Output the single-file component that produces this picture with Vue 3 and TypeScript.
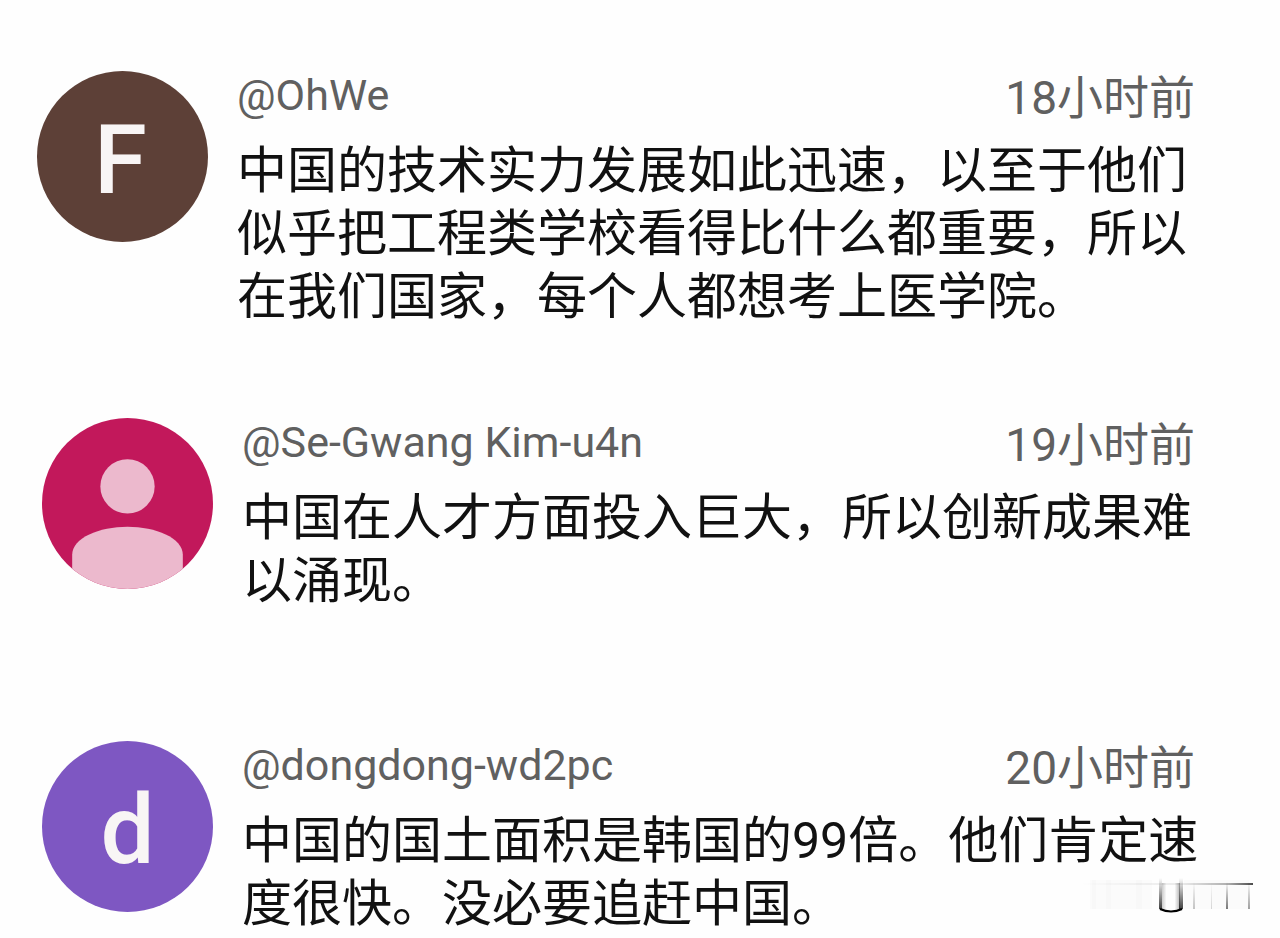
<script setup lang="ts">
interface Comment {
  id: string
  author: string
  time: string
  avatar: 'F' | 'd' | 'person'
  lines: string[]
}

const comments: Comment[] = [
  {
    id: 'first',
    author: '@OhWe',
    time: '18小时前',
    avatar: 'F',
    lines: [
      '中国的技术实力发展如此迅速，以至于他们',
      '似乎把工程类学校看得比什么都重要，所以',
      '在我们国家，每个人都想考上医学院。',
    ],
  },
  {
    id: 'second',
    author: '@Se-Gwang Kim-u4n',
    time: '19小时前',
    avatar: 'person',
    lines: ['中国在人才方面投入巨大，所以创新成果难', '以涌现。'],
  },
  {
    id: 'third',
    author: '@dongdong-wd2pc',
    time: '20小时前',
    avatar: 'd',
    lines: ['中国的国土面积是韩国的99倍。他们肯定速', '度很快。没必要追赶中国。'],
  },
]
</script>

<template>
  <main class="page">
    <article v-for="c in comments" :key="c.id" class="comment" :class="c.id">
      <div class="avatar">
        <svg v-if="c.avatar === 'person'" viewBox="0 0 170 170" aria-hidden="true">
          <circle cx="85" cy="68" r="27" />
          <path d="M30 172v-36c0-17 27-28 55-28s55 11 55 28v36z" />
        </svg>
        <span v-else class="letter">{{ c.avatar }}</span>
      </div>
      <div class="body">
        <header class="meta">
          <span class="author">{{ c.author }}</span>
          <time class="time">{{ c.time }}</time>
        </header>
        <p class="text">
          <span v-for="line in c.lines" :key="line" class="line">{{ line }}</span>
        </p>
      </div>
    </article>
    <svg class="mark" viewBox="0 0 180 45" aria-hidden="true">
      <defs>
        <linearGradient id="down" x1="0" x2="0" y1="0" y2="1">
          <stop offset="0" stop-color="#000" stop-opacity="0" />
          <stop offset="1" stop-color="#000" stop-opacity="0.75" />
        </linearGradient>
        <linearGradient id="across" x1="0" x2="1" y1="0" y2="0">
          <stop offset="0" stop-color="#000" stop-opacity="0" />
          <stop offset="0.6" stop-color="#000" stop-opacity="0.08" />
          <stop offset="0.85" stop-color="#000" stop-opacity="0.3" />
          <stop offset="1" stop-color="#000" stop-opacity="0.7" />
        </linearGradient>
        <linearGradient id="inner" x1="0" x2="1" y1="0" y2="0">
          <stop offset="0" stop-color="#000" stop-opacity="0.2" />
          <stop offset="0.25" stop-color="#000" stop-opacity="0" />
          <stop offset="0.7" stop-color="#000" stop-opacity="0" />
          <stop offset="1" stop-color="#000" stop-opacity="0.3" />
        </linearGradient>
      </defs>
      <g fill="#000" fill-opacity="0.01">
        <rect x="10" y="8" width="62" height="29" />
        <rect x="12" y="8" width="4" height="29" />
        <rect x="26" y="8" width="5" height="29" />
        <rect x="56" y="8" width="6" height="29" />
        <rect x="104" y="8" width="65" height="29" />
      </g>
      <rect x="82" y="11" width="18" height="26" fill="url(#inner)" />
      <g fill="url(#down)">
        <rect x="79" y="6" width="3" height="31" />
        <rect x="99" y="6" width="4" height="31" />
        <rect x="113" y="10" width="2" height="27" opacity="0.3" />
        <rect x="131" y="10" width="1" height="27" opacity="0.2" />
        <rect x="146" y="10" width="2" height="27" opacity="0.7" />
        <rect x="168" y="10" width="2" height="27" opacity="0.5" />
      </g>
      <path d="M80 37q11 5 22 0" fill="none" stroke="#000" stroke-width="2" />
      <rect x="0" y="11" width="173" height="2" fill="url(#across)" />
    </svg>
  </main>
</template>

<style>
body {
  margin: 0;
  background: #fefefe;
}
</style>

<style scoped>
.page {
  position: relative;
  overflow: hidden;
  padding: 71px 80px 0 37px;
  font-family: Roboto, 'Noto Sans CJK SC', sans-serif;
  color: #111;
}
.comment {
  display: flex;
  gap: 29px;
}
.second {
  margin-top: 89px;
  padding-left: 5px;
}
.third {
  margin-top: 128px;
  padding-left: 5px;
}
.avatar {
  flex: none;
  display: flex;
  align-items: center;
  justify-content: center;
  width: 171px;
  height: 171px;
  border-radius: 50%;
  overflow: hidden;
  background: #5d4037;
  color: #f8f5f5;
  font-size: 96px;
  font-weight: 500;
}
.letter {
  padding: 6px 4px 0 0;
}
.second .avatar {
  background: #c2185b;
}
.third .avatar {
  background: #7e57c2;
}
.third .letter {
  padding-right: 0;
}
.avatar svg {
  width: 100%;
  height: 100%;
  fill: #ecb9cd;
}
.body {
  flex: 1;
  min-width: 0;
}
.meta {
  display: flex;
  justify-content: space-between;
  height: 69px;
  color: #606060;
}
.author {
  font-size: 43px;
  line-height: 48px;
}
.time {
  padding-right: 5px;
  font-size: 46px;
  line-height: 54px;
}
.text {
  margin: 0;
  font-size: 50px;
  line-height: 63px;
}
.line {
  display: block;
  white-space: nowrap;
}
.mark {
  position: absolute;
  right: 20px;
  bottom: 19px;
  width: 180px;
  height: 45px;
}
</style>
